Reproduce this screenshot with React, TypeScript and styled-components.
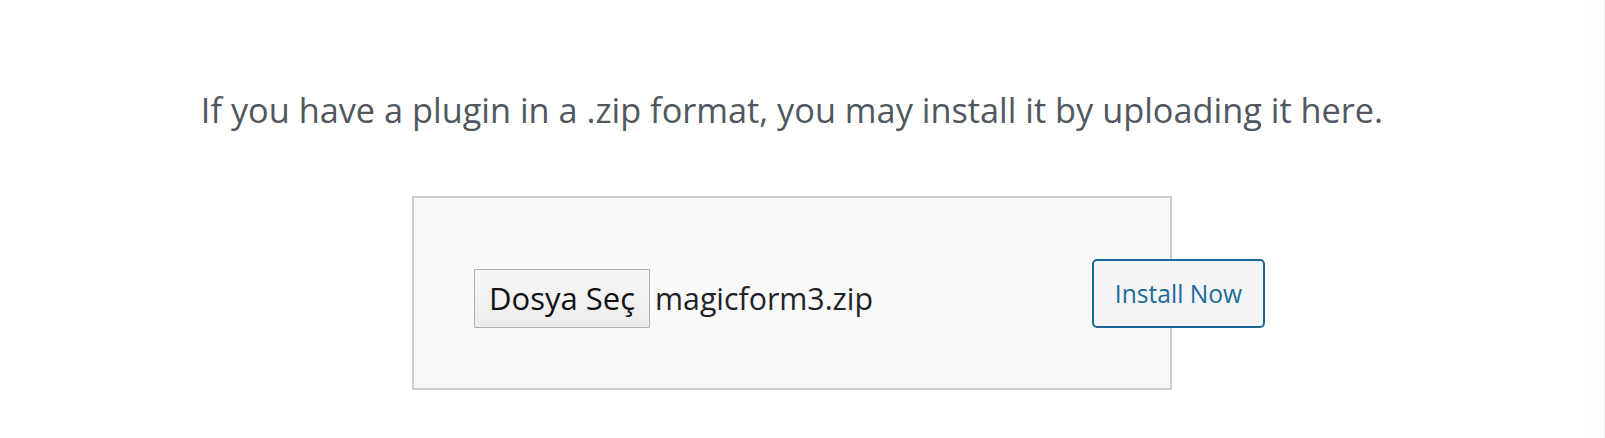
import React from "react";
import styled, { createGlobalStyle } from "styled-components";

const GlobalStyle = createGlobalStyle`
  html, body { margin: 0; padding: 0; background: #ffffff; }
  body { font-family: "Open Sans", "Noto Sans", Arial, sans-serif; }
`;

const Page = styled.div`
  width: 1605px;
  height: 438px;
  display: flex;
  background: #fff;
  overflow: hidden;
`;

const Main = styled.main`
  width: 1584px;
  display: flex;
  flex-direction: column;
  align-items: center;
  padding-top: 85px;
  box-sizing: border-box;
`;

const EdgeStrip = styled.div`
  flex: 1;
  border-right: 1px solid #ececec;
  background: #fdfdfd;
`;

const Help = styled.p`
  margin: 0;
  font-size: 34.3px;
  line-height: 50px;
  color: #50575e;
  font-weight: 400;
  white-space: nowrap;
`;

const UploadBox = styled.form`
  margin-top: 61px;
  width: 760px;
  height: 194px;
  box-sizing: border-box;
  border: 2px solid #cdcdcd;
  background: #f9f9f9;
  display: flex;
  align-items: center;
  padding-left: 60px;
`;

const Row = styled.div`
  width: 791px;
  flex: none;
  display: flex;
  align-items: center;
  justify-content: space-between;
`;

const FileGroup = styled.div`
  display: flex;
  align-items: center;
  margin-top: 10px;
`;

const ChooseButton = styled.button`
  width: 176px;
  height: 59px;
  box-sizing: border-box;
  border: 1px solid #adadad;
  border-radius: 1px;
  background: linear-gradient(#f7f7f7, #ececec);
  font-family: "Open Sans", "Noto Sans", Arial, sans-serif;
  font-size: 31px;
  color: #111;
  padding: 0;
  white-space: nowrap;
`;

const FileName = styled.span`
  margin-left: 5px;
  font-size: 30.3px;
  color: #1d2327;
`;

const InstallButton = styled.button`
  width: 173px;
  height: 69px;
  box-sizing: border-box;
  border: 2px solid #1d6796;
  border-radius: 5px;
  background: #f4f5f6;
  color: #1e6a99;
  font-family: "Open Sans", "Noto Sans", Arial, sans-serif;
  font-size: 24.6px;
  padding: 0;
  white-space: nowrap;
`;

export default function App() {
  return (
    <>
      <GlobalStyle />
      <Page>
        <Main>
          <Help>
            If you have a plugin in a .zip format, you may install it by uploading it here.
          </Help>
          <UploadBox onSubmit={(e) => e.preventDefault()}>
            <Row>
              <FileGroup>
                <ChooseButton type="button">Dosya Seç</ChooseButton>
                <FileName>magicform3.zip</FileName>
              </FileGroup>
              <InstallButton type="submit">Install Now</InstallButton>
            </Row>
          </UploadBox>
        </Main>
        <EdgeStrip />
      </Page>
    </>
  );
}
